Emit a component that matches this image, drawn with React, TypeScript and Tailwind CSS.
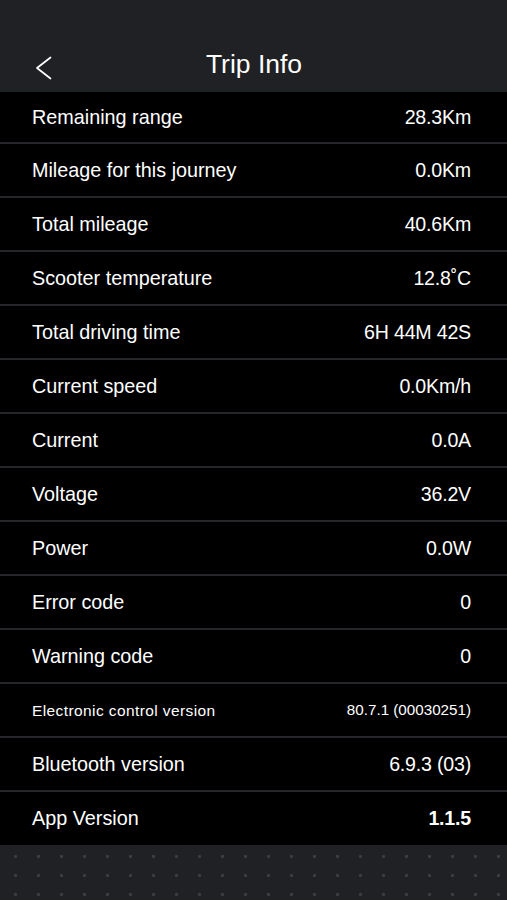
type Row = { label: string; value: string; small?: boolean; bold?: boolean }

const ROWS: Row[] = [
  { label: 'Remaining range',            value: '28.3Km' },
  { label: 'Mileage for this journey',   value: '0.0Km' },
  { label: 'Total mileage',              value: '40.6Km' },
  { label: 'Scooter temperature',        value: '12.8˚C' },
  { label: 'Total driving time',         value: '6H 44M 42S' },
  { label: 'Current speed',              value: '0.0Km/h' },
  { label: 'Current',                    value: '0.0A' },
  { label: 'Voltage',                    value: '36.2V' },
  { label: 'Power',                      value: '0.0W' },
  { label: 'Error code',                 value: '0' },
  { label: 'Warning code',               value: '0' },
  { label: 'Electronic control version', value: '80.7.1 (00030251)', small: true },
  { label: 'Bluetooth version',          value: '6.9.3 (03)' },
  { label: 'App Version',                value: '1.1.5', bold: true },
]

export default function App() {
  return (
    <div className="w-[507px] h-[900px] flex flex-col bg-[#1f2124] text-white font-['Liberation_Sans',Arial,sans-serif] overflow-hidden">
      {/* Header */}
      <div className="h-[92px] shrink-0 flex items-end pb-[10px] relative">
        <button className="absolute left-[35px] top-[56px] text-white">
          <svg width="18" height="24" viewBox="0 0 18 24" fill="none" stroke="currentColor" strokeWidth="1.7" strokeLinecap="round" strokeLinejoin="round">
            <polyline points="15.5,1.5 2,12 15.5,22.5" />
          </svg>
        </button>
        <h1 className="w-full text-center text-[26.5px] leading-[36px] pl-[1px]">Trip Info</h1>
      </div>

      {/* List */}
      <div className="bg-black flex flex-col divide-y-2 divide-[#26272a]">
        {ROWS.map((r) => (
          <div key={r.label} className="h-[54px] first:h-[52px] last:h-[53px] pt-[1px] flex items-center justify-between pl-[32px] pr-[36px]">
            <span className={r.small ? 'text-[15.5px] tracking-[0.4px]' : 'text-[19.8px]'}>{r.label}</span>
            <span className={`${r.small ? 'text-[15.2px]' : 'text-[19.6px] tracking-[-0.2px]'} ${r.bold ? 'font-bold' : ''}`}>{r.value}</span>
          </div>
        ))}
      </div>

      {/* Dotted footer */}
      <div className="flex-1 bg-[#1f2124] bg-[radial-gradient(circle,#3a3d42_1.3px,transparent_2px)] bg-[length:23px_19px] bg-[position:4px_2px]" />
    </div>
  )
}
